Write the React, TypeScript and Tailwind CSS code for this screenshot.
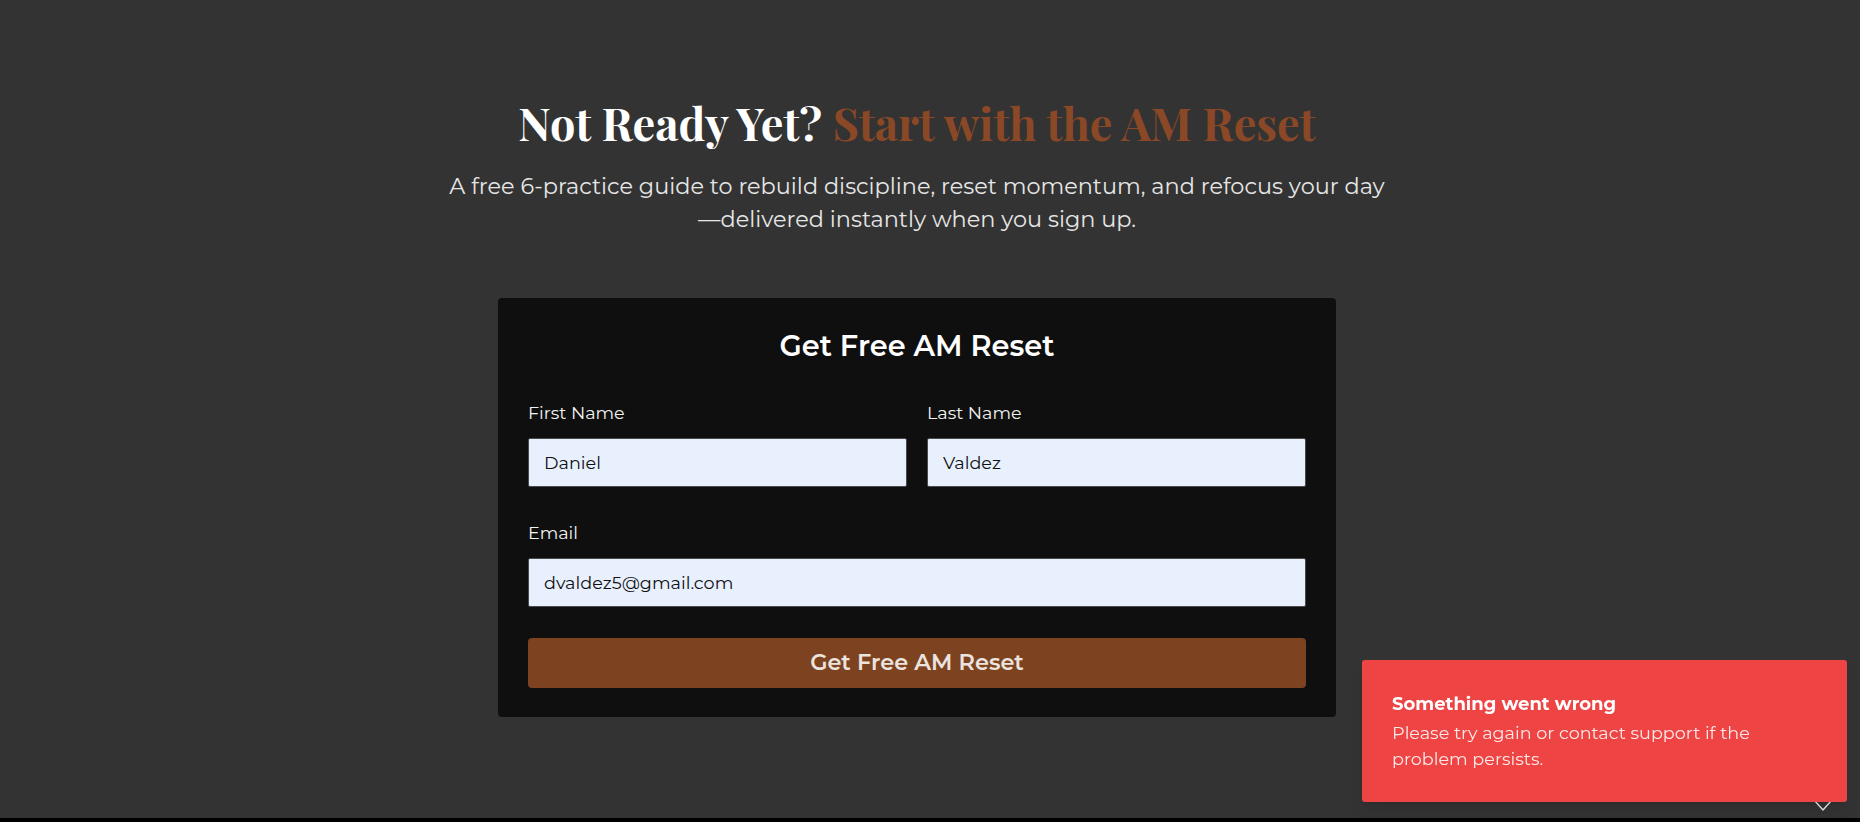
const sans = "font-['Montserrat','DejaVu_Sans',sans-serif]";

const Field = ({ label, value }: { label: string; value: string }) => (
    <label className="flex flex-col">
        <span className="text-[17.5px] leading-[24px] text-[#f2f2f2]">{label}</span>
        <input
            readOnly
            value={value}
            className="mt-[13px] h-[49px] w-full rounded-[2px] border border-[#4a4a4a] bg-[#e8f0fe] px-[15px] text-[17.6px] text-[#111111] outline-none"
        />
    </label>
);

const App = () => {
    return (
        <div className={`h-[822px] bg-[#333333] flex flex-col overflow-hidden ${sans}`}>
            <section className="flex-1 pt-[92px] pr-[26px] flex flex-col items-center">
                <h2 className="font-['Playfair_Display','Liberation_Serif',serif] font-bold text-[45px] leading-[60px] text-white">
                    Not Ready Yet? <span className="text-[#8b4826]">Start with the AM Reset</span>
                </h2>
                <p className="mt-[18px] max-w-[1000px] text-center text-[22.4px] leading-[33px] text-[#e6e6e6]">
                    A free 6-practice guide to rebuild discipline, reset momentum, and refocus your day
                    <br />—delivered instantly when you sign up.
                </p>

                <div className="mt-[62px] w-[838px] rounded-[4px] bg-[#0f0f0f] px-[30px] pt-[30px] pb-[29px]">
                    <h3 className="text-center text-[28.8px] leading-[36px] font-semibold text-white">Get Free AM Reset</h3>
                    <div className="mt-[37px] grid grid-cols-2 gap-x-[20px]">
                        <Field label="First Name" value="Daniel" />
                        <Field label="Last Name" value="Valdez" />
                    </div>
                    <div className="mt-[34px]">
                        <Field label="Email" value="dvaldez5@gmail.com" />
                    </div>
                    <button className="mt-[31px] h-[50px] w-full rounded-[4px] bg-[#7d4220] text-[22.4px] font-semibold text-[#ebe3de]">
                        Get Free AM Reset
                    </button>
                </div>
            </section>
            <div className="h-[4px] bg-black" />

            <div className="fixed right-[27px] bottom-[10px] z-0">
                <svg width="20" height="14" viewBox="0 0 20 14" fill="none" stroke="#e5e5e5" strokeWidth="1.5">
                    <path d="M1 2l9 10 9-10" />
                </svg>
            </div>

            <div className="fixed right-[13px] bottom-[20px] z-10 w-[485px] rounded-[3px] bg-[#ef4444] px-[30px] pt-[32px] pb-[30px] text-white shadow-lg">
                <div className="text-[18px] leading-[24px] font-bold">Something went wrong</div>
                <div className="mt-[4px] text-[17.6px] leading-[26px] text-[#fde8e8]">
                    Please try again or contact support if the
                    <br />problem persists.
                </div>
            </div>
        </div>
    );
};

export default App;
